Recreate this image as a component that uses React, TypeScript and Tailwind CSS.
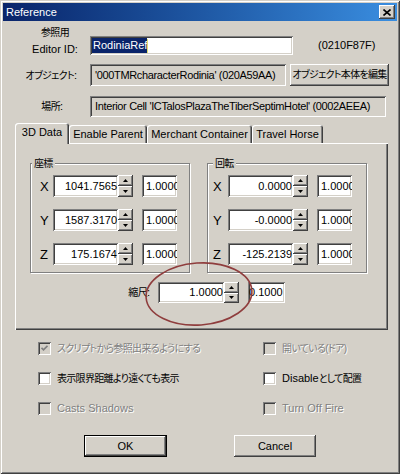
import React from 'react';

const sunken =
  'shadow-[inset_1px_1px_0_#808080,inset_-1px_-1px_0_#ffffff,inset_2px_2px_0_#404040,inset_-2px_-2px_0_#d4d0c8]';
const raised =
  'shadow-[inset_-1px_-1px_0_#404040,inset_1px_1px_0_#ffffff,inset_-2px_-2px_0_#808080,inset_2px_2px_0_#d4d0c8]';
const disabledText = 'text-[#808080] [text-shadow:1px_1px_0_#ffffff]';

// Japanese runs are set a touch smaller and tighter, like the old UI font
function J({ children }: { children: React.ReactNode }) {
  return <span className="text-[10px] tracking-[-0.7px]">{children}</span>;
}

function Field({ className = '', children }: { className?: string; children?: React.ReactNode }) {
  return (
    <div className={`flex items-center overflow-hidden whitespace-nowrap leading-none ${sunken} ${className}`}>
      {children}
    </div>
  );
}

function Button({ className = '', children, isDefault = false }: { className?: string; children?: React.ReactNode; isDefault?: boolean }) {
  const border = isDefault
    ? 'shadow-[inset_0_0_0_1px_#000000,inset_-2px_-2px_0_#404040,inset_2px_2px_0_#ffffff,inset_-3px_-3px_0_#808080]'
    : raised;
  return (
    <div className={`flex items-center justify-center whitespace-nowrap bg-[#d4d0c8] leading-none ${border} ${className}`}>
      {children}
    </div>
  );
}

function Arrow({ up }: { up: boolean }) {
  return (
    <svg width="5" height="3" viewBox="0 0 5 3">
      <polygon points={up ? '2.5,0 5,3 0,3' : '0,0 5,0 2.5,3'} fill="#000" />
    </svg>
  );
}

function Spin({ h = 'h-[22px]' }: { h?: string }) {
  return (
    <div className={`flex flex-col w-[15px] ${h}`}>
      <div className={`flex-1 flex items-center justify-center bg-[#d4d0c8] ${raised}`}>
        <Arrow up />
      </div>
      <div className={`flex-1 flex items-center justify-center bg-[#d4d0c8] ${raised}`}>
        <Arrow up={false} />
      </div>
    </div>
  );
}

interface AxisRow {
  axis: string;
  value: string;
}

function AxisGroup({ title, rows, first }: { title: string; rows: AxisRow[]; first: boolean }) {
  return (
    <div className="relative w-[160px] h-[110px] border border-[#808080] shadow-[inset_1px_1px_0_#ffffff,1px_1px_0_#ffffff]">
      <span className={`absolute -top-[8px] px-[2px] bg-[#d4d0c8] leading-[14px] ${first ? 'left-[1px]' : 'left-[5px]'}`}>
        <J>{title}</J>
      </span>
      <div className="flex flex-col pt-[11px] gap-[12px]">
        {rows.map((r) => (
          <div key={r.axis} className={`flex items-center h-[22px] ${first ? 'pl-[9px]' : 'pl-[5px]'}`}>
            <span className={`text-[13px] leading-none ${first ? 'w-[13px]' : 'w-[15px]'}`}>{r.axis}</span>
            <Field className="w-[65px] h-[22px] bg-white justify-end pr-[1px]">{r.value}</Field>
            <Spin />
            <Field className="ml-[9px] w-[35px] h-[22px] bg-white pl-[4px]">1.0000</Field>
          </div>
        ))}
      </div>
    </div>
  );
}

function Check({ children, checked = false, disabled = false }: { children: React.ReactNode; checked?: boolean; disabled?: boolean }) {
  return (
    <div className="flex items-center">
      <div className={`flex items-center justify-center w-[13px] h-[13px] ${sunken} ${disabled ? 'bg-[#d4d0c8]' : 'bg-white'}`}>
        {checked && (
          <svg width="7" height="7" viewBox="0 0 7 7">
            <path d="M0.5 2.8 L2.5 4.8 L6.5 0.8" stroke={disabled ? '#808080' : '#000'} strokeWidth="1.7" fill="none" />
          </svg>
        )}
      </div>
      <span className={`ml-[6px] whitespace-nowrap leading-none ${disabled ? disabledText : ''}`}>{children}</span>
    </div>
  );
}

const tabs = ['Enable Parent', 'Merchant Container', 'Travel Horse'];
const tabWidths = ['w-[78px]', 'w-[105px]', 'w-[71px]'];

export default function App() {
  return (
    <div className="relative w-[400px] h-[474px] p-[3px] bg-[#d4d0c8] text-[11px] text-black font-['Liberation_Sans','Noto_Sans_CJK_JP',sans-serif] [font-feature-settings:'palt'] shadow-[inset_1px_1px_0_#d4d0c8,inset_-1px_-1px_0_#404040,inset_2px_2px_0_#ffffff,inset_-2px_-2px_0_#808080]">
      {/* title bar */}
      <div className="flex items-center h-[18px] pl-[3px] pr-[2px] bg-linear-to-r from-[#0a246a] to-[#3a8ee0]">
        <span className="text-white leading-none">Reference</span>
        <Button className="ml-auto w-[16px] h-[14px]">
          <svg width="8" height="7" viewBox="0 0 8 7">
            <path d="M0.5 0.5 L7.5 6.5 M7.5 0.5 L0.5 6.5" stroke="#000" strokeWidth="1.6" />
          </svg>
        </Button>
      </div>

      {/* editor id */}
      <div className="flex h-[33px] mt-[3px]">
        <div className="ml-[27px] w-[50px] text-center leading-[16px] whitespace-nowrap">
          <div><J>参照用</J></div>
          <div>Editor ID:</div>
        </div>
        <Field className="ml-[10px] mt-[12px] w-[203px] h-[19px] bg-white pl-[2px]">
          <span className="bg-[#0a246a] text-white pl-[1px] leading-[15px]">RodiniaRef</span>
          <span className="w-px h-[14px] bg-[#e0e070]" />
        </Field>
        <div className="ml-[25px] mt-[14px] leading-[14px]">(0210F87F)</div>
      </div>

      {/* object */}
      <div className="flex items-center mt-[7px] h-[22px]">
        <div className="w-[74px] text-right whitespace-nowrap">
          <J>オブジェクト</J>:
        </div>
        <Field className="ml-[13px] w-[196px] h-[22px] bg-[#d4d0c8] pl-[5px] tracking-[-0.35px]">
          '000TMRcharacterRodinia' (020A59AA)
        </Field>
        <Button className="ml-[4px] w-[99px] h-[22px]">
          <J>オブジェクト本体を編集</J>
        </Button>
      </div>

      {/* location */}
      <div className="flex items-center mt-[10px] h-[21px]">
        <div className="w-[60px] text-right whitespace-nowrap">
          <J>場所</J>:
        </div>
        <Field className="ml-[27px] w-[296px] h-[21px] bg-[#d4d0c8] pl-[5px] tracking-[-0.35px]">
          Interior Cell 'ICTalosPlazaTheTiberSeptimHotel' (0002AEEA)
        </Field>
      </div>

      {/* tabs */}
      <div className="flex items-end mt-[6px] ml-[12px] h-[20px]">
        <div className="relative z-10 -mb-px flex items-center justify-center w-[54px] h-[21px] pb-[2px] bg-[#d4d0c8] rounded-t-[3px] shadow-[inset_1px_1px_0_#ffffff,inset_-1px_0_0_#404040,inset_-2px_0_0_#808080]">
          3D Data
        </div>
        {tabs.map((t, i) => (
          <div
            key={t}
            className={`flex items-center justify-center h-[18px] whitespace-nowrap bg-[#d4d0c8] rounded-t-[3px] shadow-[inset_1px_1px_0_#ffffff,inset_-1px_0_0_#404040,inset_-2px_0_0_#808080] ${tabWidths[i]}`}
          >
            {t}
          </div>
        ))}
      </div>

      {/* tab panel */}
      <div className="flex flex-col ml-[12px] w-[373px] h-[187px] shadow-[inset_1px_1px_0_#ffffff,inset_-1px_-1px_0_#404040,inset_-2px_-2px_0_#808080]">
        <div className="flex mt-[20px] ml-[15px] gap-[17px]">
          <AxisGroup
            title="座標"
            first
            rows={[
              { axis: 'X', value: '1041.7565' },
              { axis: 'Y', value: '1587.3170' },
              { axis: 'Z', value: '175.1674' },
            ]}
          />
          <AxisGroup
            title="回転"
            first={false}
            rows={[
              { axis: 'X', value: '0.0000' },
              { axis: 'Y', value: '-0.0000' },
              { axis: 'Z', value: '-125.2139' },
            ]}
          />
        </div>
        <div className="flex items-center mt-[9px] h-[21px]">
          <div className="w-[135px] text-right whitespace-nowrap">
            <J>縮尺</J>:
          </div>
          <Field className="ml-[8px] w-[66px] h-[21px] bg-white justify-end pr-[1px]">1.0000</Field>
          <Spin h="h-[21px]" />
          <Field className="ml-[9px] w-[37px] h-[21px] bg-white pl-[1px]">0.1000</Field>
        </div>
      </div>

      {/* checkboxes */}
      <div className="flex flex-col mt-[12px] gap-[17px]">
        <div className="flex items-center h-[13px]">
          <div className="ml-[35px] w-[225px]">
            <Check checked disabled>
              <J>スクリプトから参照出来るようにする</J>
            </Check>
          </div>
          <Check disabled>
            <J>開いている(ドア)</J>
          </Check>
        </div>
        <div className="flex items-center h-[13px]">
          <div className="ml-[35px] w-[225px]">
            <Check>
              <J>表示限界距離より遠くても表示</J>
            </Check>
          </div>
          <Check>
            Disable<J>として配置</J>
          </Check>
        </div>
        <div className="flex items-center h-[13px]">
          <div className="ml-[35px] w-[225px]">
            <Check disabled>Casts Shadows</Check>
          </div>
          <Check disabled>Turn Off Fire</Check>
        </div>
      </div>

      {/* buttons */}
      <div className="flex mt-[20px]">
        <Button isDefault className="ml-[81px] w-[83px] h-[22px]">OK</Button>
        <Button className="ml-[67px] w-[82px] h-[22px]">Cancel</Button>
      </div>

      {/* hand-drawn annotation */}
      <svg className="absolute left-0 top-0 pointer-events-none" width="400" height="474">
        <ellipse cx="199" cy="294" rx="53" ry="31" fill="none" stroke="#8f3d3d" strokeWidth="1.6" transform="rotate(-4 199 294)" />
      </svg>
    </div>
  );
}
